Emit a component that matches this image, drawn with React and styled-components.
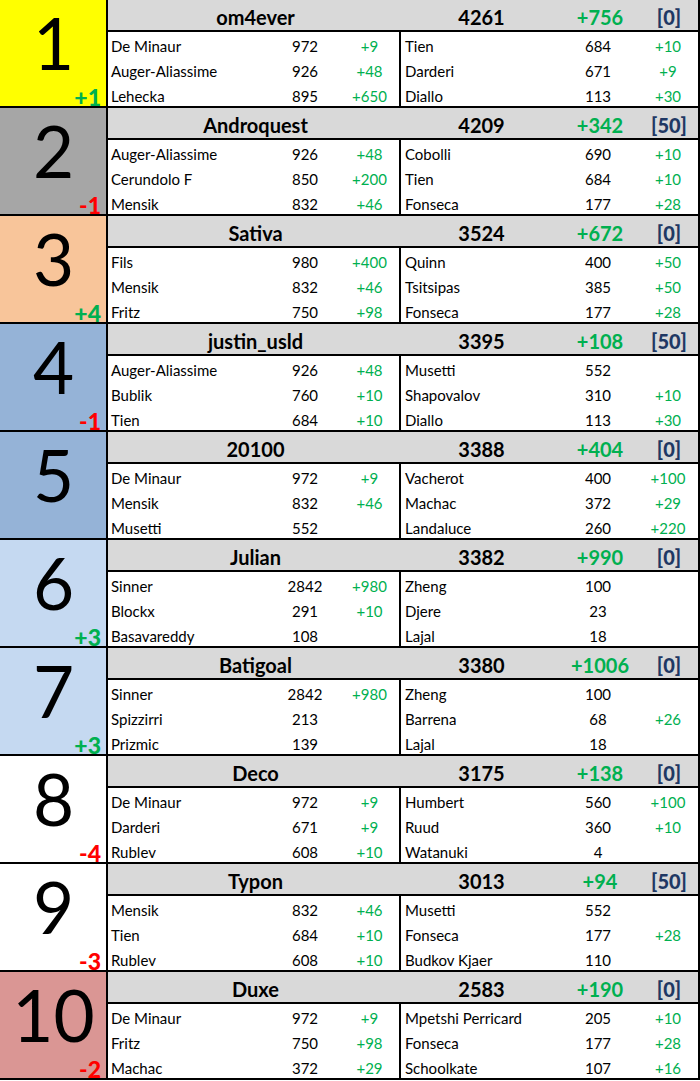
import styled, { createGlobalStyle } from "styled-components";

const teams = [
  { rank: 1, bg: "#ffff00", move: "+1", name: "om4ever", total: 4261, gain: "+756", bonus: "[0]", rows: [
    ["De Minaur", 972, "+9", "Tien", 684, "+10"],
    ["Auger-Aliassime", 926, "+48", "Darderi", 671, "+9"],
    ["Lehecka", 895, "+650", "Diallo", 113, "+30"],
  ]},
  { rank: 2, bg: "#a6a6a6", move: "-1", name: "Androquest", total: 4209, gain: "+342", bonus: "[50]", rows: [
    ["Auger-Aliassime", 926, "+48", "Cobolli", 690, "+10"],
    ["Cerundolo F", 850, "+200", "Tien", 684, "+10"],
    ["Mensik", 832, "+46", "Fonseca", 177, "+28"],
  ]},
  { rank: 3, bg: "#f8c59a", move: "+4", name: "Sativa", total: 3524, gain: "+672", bonus: "[0]", rows: [
    ["Fils", 980, "+400", "Quinn", 400, "+50"],
    ["Mensik", 832, "+46", "Tsitsipas", 385, "+50"],
    ["Fritz", 750, "+98", "Fonseca", 177, "+28"],
  ]},
  { rank: 4, bg: "#95b3d7", move: "-1", name: "justin_usld", total: 3395, gain: "+108", bonus: "[50]", rows: [
    ["Auger-Aliassime", 926, "+48", "Musetti", 552, ""],
    ["Bublik", 760, "+10", "Shapovalov", 310, "+10"],
    ["Tien", 684, "+10", "Diallo", 113, "+30"],
  ]},
  { rank: 5, bg: "#95b3d7", move: "", name: "20100", total: 3388, gain: "+404", bonus: "[0]", rows: [
    ["De Minaur", 972, "+9", "Vacherot", 400, "+100"],
    ["Mensik", 832, "+46", "Machac", 372, "+29"],
    ["Musetti", 552, "", "Landaluce", 260, "+220"],
  ]},
  { rank: 6, bg: "#c5d9f1", move: "+3", name: "Julian", total: 3382, gain: "+990", bonus: "[0]", rows: [
    ["Sinner", 2842, "+980", "Zheng", 100, ""],
    ["Blockx", 291, "+10", "Djere", 23, ""],
    ["Basavareddy", 108, "", "Lajal", 18, ""],
  ]},
  { rank: 7, bg: "#c5d9f1", move: "+3", name: "Batigoal", total: 3380, gain: "+1006", bonus: "[0]", rows: [
    ["Sinner", 2842, "+980", "Zheng", 100, ""],
    ["Spizzirri", 213, "", "Barrena", 68, "+26"],
    ["Prizmic", 139, "", "Lajal", 18, ""],
  ]},
  { rank: 8, bg: "#ffffff", move: "-4", name: "Deco", total: 3175, gain: "+138", bonus: "[0]", rows: [
    ["De Minaur", 972, "+9", "Humbert", 560, "+100"],
    ["Darderi", 671, "+9", "Ruud", 360, "+10"],
    ["Rublev", 608, "+10", "Watanuki", 4, ""],
  ]},
  { rank: 9, bg: "#ffffff", move: "-3", name: "Typon", total: 3013, gain: "+94", bonus: "[50]", rows: [
    ["Mensik", 832, "+46", "Musetti", 552, ""],
    ["Tien", 684, "+10", "Fonseca", 177, "+28"],
    ["Rublev", 608, "+10", "Budkov Kjaer", 110, ""],
  ]},
  { rank: 10, bg: "#da9694", move: "-2", name: "Duxe", total: 2583, gain: "+190", bonus: "[0]", rows: [
    ["De Minaur", 972, "+9", "Mpetshi Perricard", 205, "+10"],
    ["Fritz", 750, "+98", "Fonseca", 177, "+28"],
    ["Machac", 372, "+29", "Schoolkate", 107, "+16"],
  ]},
];

const Global = createGlobalStyle`
  body {
    margin: 0;
    background: #fff;
    font-family: Lato, "Open Sans", sans-serif;
    color: #000;
  }
`;

const Board = styled.div`
  width: 700px;
`;

const Block = styled.div`
  display: grid;
  grid-template-columns: 108px 1fr;
  height: 108px;
  box-sizing: border-box;
  border-bottom: 2px solid #000;
`;

const RankCell = styled.div`
  background: ${(p) => p.$bg};
  border-right: 2px solid #000;
  display: flex;
  flex-direction: column;
  justify-content: space-between;
  padding: 7px 5px 0 0;
`;

const RankNum = styled.div`
  font-size: 71px;
  line-height: 71px;
  text-align: center;
  padding-left: 6px;
`;

const Move = styled.div`
  font-size: 23px;
  font-weight: 900;
  line-height: 17px;
  height: 17px;
  text-align: right;
  color: ${(p) => (p.$up ? "#00b050" : "#ff0000")};
`;

const Content = styled.div`
  border-right: 2px solid #000;
  display: flex;
  flex-direction: column;
`;

const Header = styled.div`
  display: grid;
  grid-template-columns: 295px 157px 80px 1fr;
  height: 32px;
  box-sizing: border-box;
  padding-top: 5px;
  background: #d9d9d9;
  border-bottom: 2px solid #000;
  font-size: 20px;
  font-weight: 700;
  line-height: 25px;
  text-align: center;
`;

const Green = styled.span`
  color: #00b050;
`;

const Bonus = styled.span`
  color: #1f3864;
  font-weight: 900;
`;

const Rows = styled.div`
  display: grid;
  grid-template-columns: 293px 1fr;
  flex: 1;
`;

const Half = styled.div`
  display: grid;
  grid-template-columns: ${(p) => p.$cols};
  grid-template-rows: 25px 25px 24px;
  font-size: 15px;
  border-right: ${(p) => (p.$divider ? "2px solid #000" : "none")};
  padding-left: ${(p) => p.$pad};
`;

const Cell = styled.div`
  box-sizing: border-box;
  padding-top: 4px;
  line-height: 21px;
  white-space: nowrap;
`;

const Name = styled(Cell)``;

const Pts = styled(Cell)`
  text-align: center;
`;

const Gain = styled(Cell)`
  text-align: center;
  color: #00b050;
`;

const HalfRows = ({ rows, offset, ...rest }) => (
  <Half {...rest}>
    {rows.map((r, i) => [
      <Name key={`n${i}`}>{r[offset]}</Name>,
      <Pts key={`p${i}`}>{r[offset + 1]}</Pts>,
      <Gain key={`g${i}`}>{r[offset + 2]}</Gain>,
    ])}
  </Half>
);

export default function App() {
  return (
    <Board>
      <Global />
      {teams.map((t) => (
        <Block key={t.rank}>
          <RankCell $bg={t.bg}>
            <RankNum>{t.rank}</RankNum>
            <Move $up={t.move.startsWith("+")}>{t.move}</Move>
          </RankCell>
          <Content>
            <Header>
              <span>{t.name}</span>
              <span>{t.total}</span>
              <Green>{t.gain}</Green>
              <Bonus>{t.bonus}</Bonus>
            </Header>
            <Rows>
              <HalfRows rows={t.rows} offset={0} $cols="159px 70px 1fr" $pad="3px" $divider />
              <HalfRows rows={t.rows} offset={3} $cols="153px 80px 1fr" $pad="4px" />
            </Rows>
          </Content>
        </Block>
      ))}
    </Board>
  );
}
